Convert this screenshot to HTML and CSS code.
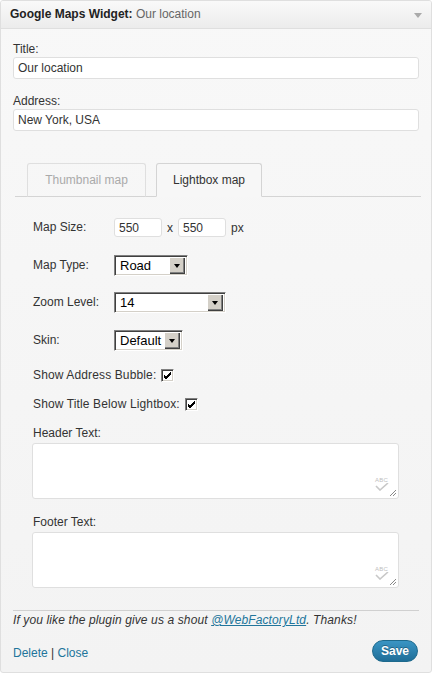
FILE: index.html
```html
<!DOCTYPE html>
<html>
<head>
<meta charset="utf-8">
<link rel="stylesheet" href="styles.css">
</head>
<body>
<div class="widget">
  <div class="widget-top">
    <div class="widget-title"><strong>Google Maps Widget:</strong> <span class="in-title">Our location</span></div>
    <span class="toggle"></span>
  </div>
  <div class="widget-inside">
    <div class="field-label first">Title:</div>
    <div class="text-input wide">Our location</div>
    <div class="field-label">Address:</div>
    <div class="text-input wide">New York, USA</div>

    <div class="tabs">
      <div class="tab tab-thumb">Thumbnail map</div>
      <div class="tab tab-light active">Lightbox map</div>
    </div>

    <div class="panel">
      <div class="row row-size">
        <span class="row-label">Map Size:</span>
        <span class="text-input small">550</span>
        <span class="unit">x</span>
        <span class="text-input small">550</span>
        <span class="unit px">px</span>
      </div>
      <div class="row row-type">
        <span class="row-label">Map Type:</span>
        <span class="select sel-type"><span class="sel-text">Road</span><span class="sel-btn"><span class="tri"></span></span></span>
      </div>
      <div class="row row-zoom">
        <span class="row-label">Zoom Level:</span>
        <span class="select sel-zoom"><span class="sel-text">14</span><span class="sel-btn"><span class="tri"></span></span></span>
      </div>
      <div class="row row-skin">
        <span class="row-label">Skin:</span>
        <span class="select sel-skin"><span class="sel-text">Default</span><span class="sel-btn"><span class="tri"></span></span></span>
      </div>
      <div class="row row-check first-check">
        <span class="check-label">Show Address Bubble:</span>
        <span class="checkbox"><svg width="9" height="9" viewBox="0 0 9 9"><path d="M1 4 L3 6 L8 1 M1 5 L3 7 L8 2 M1 6 L3 8 L8 3" stroke="#000" stroke-width="1" fill="none" shape-rendering="crispEdges"/></svg></span>
      </div>
      <div class="row row-check">
        <span class="check-label">Show Title Below Lightbox:</span>
        <span class="checkbox"><svg width="9" height="9" viewBox="0 0 9 9"><path d="M1 4 L3 6 L8 1 M1 5 L3 7 L8 2 M1 6 L3 8 L8 3" stroke="#000" stroke-width="1" fill="none" shape-rendering="crispEdges"/></svg></span>
      </div>

      <div class="area-label first-area">Header Text:</div>
      <div class="textarea">
        <span class="spell"><span class="abc">ABC</span><svg width="14" height="8" viewBox="0 0 14 8"><path d="M1 3 L5 7 L13 0" stroke="#c8c8c8" stroke-width="1.6" fill="none"/></svg></span>
        <svg class="grip" width="8" height="8" viewBox="0 0 8 8"><path d="M7 1 L1 7 M7 4 L4 7" stroke="#888" stroke-width="1"/></svg>
      </div>
      <div class="area-label">Footer Text:</div>
      <div class="textarea">
        <span class="spell"><span class="abc">ABC</span><svg width="14" height="8" viewBox="0 0 14 8"><path d="M1 3 L5 7 L13 0" stroke="#c8c8c8" stroke-width="1.6" fill="none"/></svg></span>
        <svg class="grip" width="8" height="8" viewBox="0 0 8 8"><path d="M7 1 L1 7 M7 4 L4 7" stroke="#888" stroke-width="1"/></svg>
      </div>
    </div>

    <p class="shout">If you like the plugin give us a shout <a href="#">@WebFactoryLtd</a>. Thanks!</p>

    <div class="controls">
      <div class="links"><a href="#">Delete</a> | <a href="#">Close</a></div>
      <button class="save">Save</button>
    </div>
  </div>
</div>
</body>
</html>
```
FILE: styles.css
```css
html, body {
  margin: 0;
  padding: 0;
  background: #fff;
}
body {
  font-family: "Liberation Sans", Arial, sans-serif;
  font-size: 12px;
  color: #333;
}
.widget {
  box-sizing: border-box;
  width: 432px;
  height: 673px;
  border: 1px solid #dfdfdf;
  border-radius: 3px;
  background: linear-gradient(#f8f8f8, #f3f3f3);
  overflow: hidden;
}
.widget-top {
  height: 27px;
  border-bottom: 1px solid #dfdfdf;
  background: linear-gradient(#f9f9f9, #ececec);
  display: flex;
  align-items: center;
  justify-content: space-between;
  padding: 0 9px 0 9px;
}
.widget-title {
  font-size: 12px;
  line-height: 27px;
  color: #464646;
}
.widget-title strong {
  color: #222;
}
.in-title {
  color: #666;
}
.toggle {
  width: 0;
  height: 0;
  border-left: 4px solid transparent;
  border-right: 4px solid transparent;
  border-top: 5px solid #aaa;
  margin-top: 1px;
}
.widget-inside {
  padding: 0 12px;
}
.field-label {
  line-height: 15px;
  margin-top: 15px;
}
.field-label.first {
  margin-top: 13px;
}
.text-input {
  box-sizing: border-box;
  background: #fff;
  border: 1px solid #dfdfdf;
  border-radius: 3px;
  color: #333;
  display: flex;
  align-items: center;
  padding-left: 4px;
}
.text-input.wide {
  height: 22px;
}
.tabs {
  display: flex;
  margin: 32px -2px 0 2px;
  padding-left: 12px;
  border-bottom: 1px solid #d4d4d4;
}
.tab {
  box-sizing: border-box;
  height: 34px;
  margin-bottom: -1px;
  border: 1px solid #dfdfdf;
  border-bottom-color: #d4d4d4;
  border-radius: 3px 3px 0 0;
  line-height: 32px;
  text-align: center;
  color: #aaa;
}
.tab-thumb {
  width: 119px;
  margin-right: 10px;
}
.tab-light {
  width: 106px;
}
.tab.active {
  color: #333;
  border-color: #d4d4d4;
  border-bottom-color: #f7f7f7;
  background: #f7f7f7;
}
.panel {
  padding: 0 0 0 20px;
}
.row {
  display: flex;
  align-items: center;
}
.row-label {
  width: 81px;
  line-height: 15px;
}
.row-size {
  margin-top: 21px;
  height: 19px;
}
.text-input.small {
  width: 48px;
  height: 19px;
}
.unit {
  margin: 0 5px 0 5px;
}
.unit.px {
  margin-left: 5px;
}
.row-type {
  margin-top: 18px;
  height: 21px;
}
.row-zoom {
  margin-top: 16px;
  height: 21px;
}
.row-skin {
  margin-top: 17px;
  height: 21px;
}
.select {
  box-sizing: border-box;
  height: 21px;
  display: flex;
  align-items: center;
  background: #fff;
  border-top: 1px solid #808080;
  border-left: 1px solid #808080;
  border-right: 1px solid #fff;
  border-bottom: 1px solid #fff;
  box-shadow: inset 1px 1px 0 #404040, inset -1px -1px 0 #d4d0c8;
  padding: 2px;
  font-family: "Liberation Sans", Arial, sans-serif;
  font-size: 13px;
  color: #000;
}
.sel-text {
  flex: 1;
  padding-left: 3px;
  white-space: nowrap;
}
.sel-type { width: 74px; }
.sel-zoom { width: 112px; }
.sel-skin { width: 69px; }
.sel-btn {
  box-sizing: border-box;
  flex: none;
  width: 16px;
  height: 17px;
  background: #d4d0c8;
  box-shadow: inset 1px 1px 0 #fff, inset -1px -1px 0 #404040, inset -2px -2px 0 #808080;
  display: flex;
  align-items: center;
  justify-content: center;
}
.tri {
  width: 0;
  height: 0;
  border-left: 3.5px solid transparent;
  border-right: 3.5px solid transparent;
  border-top: 4px solid #000;
}
.row-check {
  margin-top: 18px;
  height: 13px;
}
.row-check + .row-check {
  margin-top: 16px;
}
.check-label {
  line-height: 15px;
  margin-right: 5px;
  letter-spacing: 0.13px;
}
.checkbox {
  box-sizing: border-box;
  width: 13px;
  height: 13px;
  background: #fff;
  border-top: 1px solid #808080;
  border-left: 1px solid #808080;
  border-right: 1px solid #fff;
  border-bottom: 1px solid #fff;
  box-shadow: inset 1px 1px 0 #404040, inset -1px -1px 0 #d4d0c8;
  display: flex;
  align-items: center;
  justify-content: center;
}
.checkbox svg {
  display: block;
}
.area-label {
  line-height: 15px;
  margin-top: 16px;
  margin-left: -1px;
  padding-left: 1px;
}
.area-label.first-area {
  margin-top: 15px;
}
.textarea {
  position: relative;
  box-sizing: border-box;
  width: 367px;
  height: 56px;
  margin-left: -1px;
  margin-top: 2px;
  background: #fff;
  border: 1px solid #dfdfdf;
  border-radius: 3px;
}
.spell {
  position: absolute;
  right: 9px;
  bottom: 7px;
  display: flex;
  flex-direction: column;
  align-items: flex-start;
}
.abc {
  font-size: 6px;
  line-height: 6px;
  color: #c0c0c0;
  letter-spacing: 0.2px;
}
.spell svg { display: block; }
.grip {
  position: absolute;
  right: 1px;
  bottom: 1px;
}
.shout {
  margin: 22px 0 0 0;
  border-top: 1px solid #d0d0d0;
  padding-top: 2px;
  line-height: 15px;
  font-style: italic;
  color: #333;
  letter-spacing: 0.12px;
}
.shout a {
  color: #21759b;
}
.controls {
  display: flex;
  justify-content: space-between;
  align-items: center;
  margin-top: 12px;
}
.links {
  padding-top: 3px;
}
.links a {
  color: #21759b;
  text-decoration: none;
}
.save {
  box-sizing: border-box;
  width: 46px;
  height: 22px;
  border: 1px solid #1e6a8d;
  border-radius: 11px;
  background: linear-gradient(#3a95c4, #1f6e98);
  color: #fff;
  font-family: Arial, "Liberation Sans", sans-serif;
  font-weight: bold;
  font-size: 12px;
  text-shadow: 0 -1px 0 rgba(0,0,0,0.3);
  padding: 0;
  margin-right: 1px;
}
```
